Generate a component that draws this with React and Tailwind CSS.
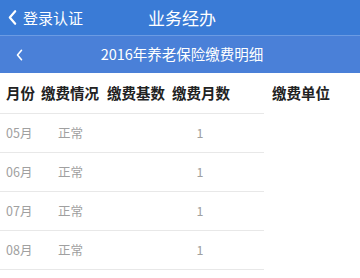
const rows = ["05月", "06月", "07月", "08月"];

function Chevron({ className }) {
  return (
    <svg className={className} viewBox="0 0 10 18" fill="none" stroke="currentColor" strokeWidth="2.4" strokeLinecap="round" strokeLinejoin="round">
      <path d="M8 2 L2 9 L8 16" />
    </svg>
  );
}

export default function App() {
  return (
    <div className="w-[360px] h-[278px] overflow-hidden bg-white font-['Noto_Sans_CJK_SC',sans-serif]">
      {/* top nav */}
      <div className="h-[35px] bg-[#3a7bd6] grid grid-cols-[1fr_auto_1fr] items-center text-white pl-[8px] pr-[4px]">
        <div className="flex items-center">
          <Chevron className="w-[9px] h-[17px]" />
          <span className="ml-[6px] text-[15px] leading-none">登录认证</span>
        </div>
        <span className="text-[17px] leading-none">业务经办</span>
        <div />
      </div>
      <div className="h-px bg-[#6b9be3]" />
      {/* sub title */}
      <div className="h-[37px] bg-[#4a80d8] grid grid-cols-[1fr_auto_1fr] items-center text-white pl-[4px]">
        <Chevron className="ml-[12px] w-[7px] h-[12px]" />
        <span className="text-[14.5px] leading-none">2016年养老保险缴费明细</span>
        <div />
      </div>
      {/* table header */}
      <div className="h-[40px] flex items-center pl-[6px] text-[14.5px] font-bold text-[#222] leading-none">
        <span className="w-[35px]">月份</span>
        <span className="w-[66px]">缴费情况</span>
        <span className="w-[65px]">缴费基数</span>
        <span className="w-[100px]">缴费月数</span>
        <span>缴费单位</span>
      </div>
      {rows.map((m) => (
        <div key={m} className="border-t border-[#e8e8e8] mr-[96px]">
          <div className="h-[38px] flex items-center pl-[6px] text-[12.5px] text-[#a0a0a0] leading-none">
            <span className="w-[52px]">{m}</span>
            <span className="w-[114px]">正常</span>
            <span className="w-[56px] text-center">1</span>
          </div>
        </div>
      ))}
      <div className="h-px bg-[#e8e8e8] mr-[96px]" />
    </div>
  );
}
